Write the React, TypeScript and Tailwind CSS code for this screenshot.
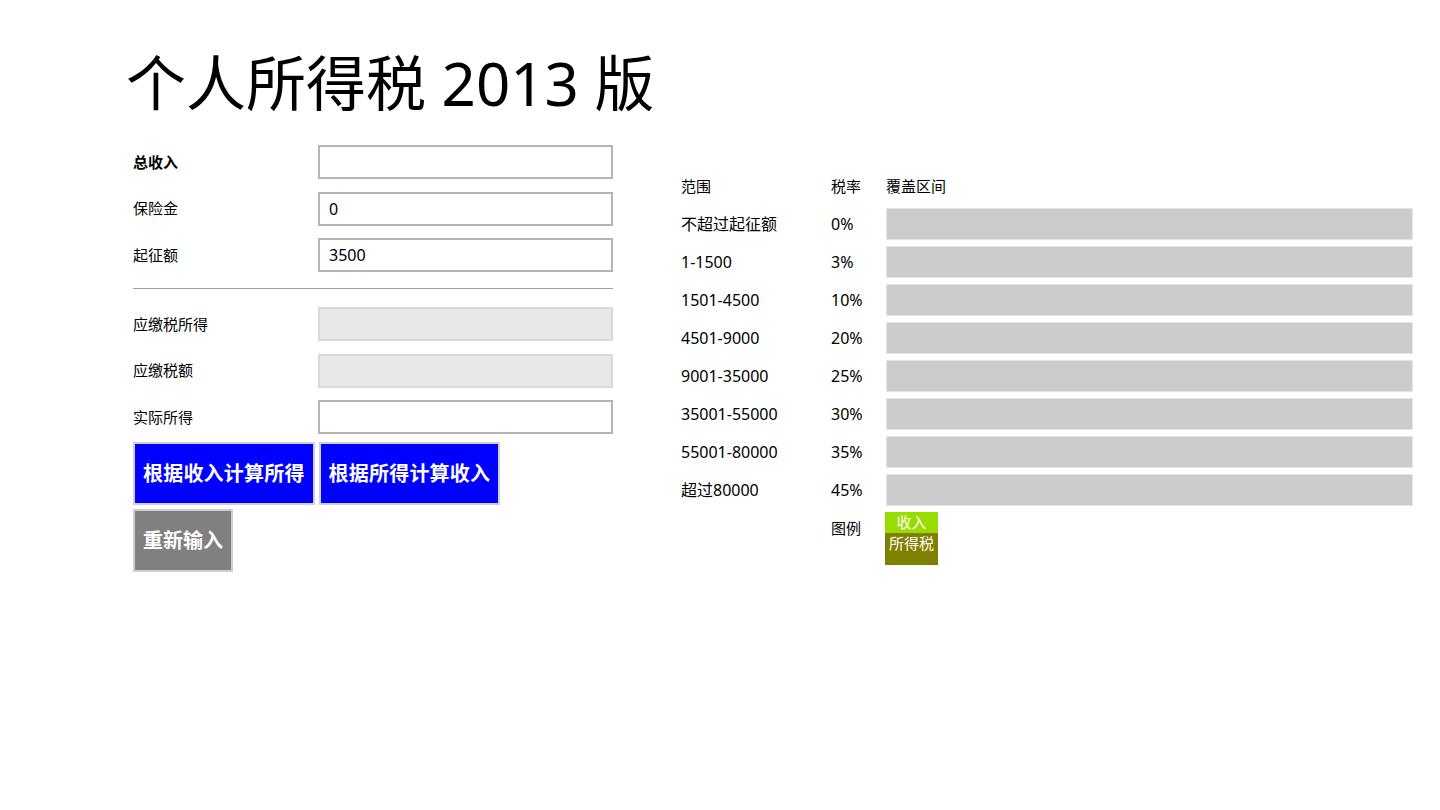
import React from 'react';

const font = { fontFamily: '"Noto Sans", "Noto Sans CJK SC", sans-serif' };

const rows = [
  { range: '不超过起征额', rate: '0%' },
  { range: '1-1500', rate: '3%' },
  { range: '1501-4500', rate: '10%' },
  { range: '4501-9000', rate: '20%' },
  { range: '9001-35000', rate: '25%' },
  { range: '35001-55000', rate: '30%' },
  { range: '55001-80000', rate: '35%' },
  { range: '超过80000', rate: '45%' },
];

function Field({ label, value, bold, disabled }: { label: string; value?: string; bold?: boolean; disabled?: boolean }) {
  return (
    <div className="flex items-center h-[34px]">
      <span className={`w-[185px] text-[15px] text-black ${bold ? 'font-bold' : ''}`}>{label}</span>
      <div
        className={`w-[295px] h-[34px] border-2 flex items-center px-[9px] text-[16px] ${
          disabled ? 'bg-[#e8e8e8] border-[#d9d9d9]' : 'bg-white border-[#b5b5b5]'
        }`}
      >
        {value}
      </div>
    </div>
  );
}

export default function App() {
  return (
    <div className="w-[1440px] h-[810px] bg-white text-black" style={font}>
      <h1 className="pl-[126px] pt-[38px] text-[60px] leading-[90px] font-normal">个人所得税 2013 版</h1>
      <div className="flex mt-[17px] pl-[133px]">
        {/* 左侧表单 */}
        <div className="w-[480px] flex flex-col">
          <div className="flex flex-col gap-[12.5px]">
            <Field label="总收入" bold />
            <Field label="保险金" value="0" />
            <Field label="起征额" value="3500" />
          </div>
          <div className="h-px bg-[#a0a0a0] mt-[16px] mb-[18px]" />
          <div className="flex flex-col gap-[12.5px]">
            <Field label="应缴税所得" disabled />
            <Field label="应缴税额" disabled />
            <Field label="实际所得" />
          </div>
          <div className="flex gap-[4px] mt-[8px]">
            <button className="h-[63px] px-[8px] bg-[#0000ff] border-2 border-[#cfcfcf] text-white text-[20px] font-bold tracking-[0.2px]">根据收入计算所得</button>
            <button className="h-[63px] px-[8px] bg-[#0000ff] border-2 border-[#cfcfcf] text-white text-[20px] font-bold tracking-[0.2px]">根据所得计算收入</button>
          </div>
          <div className="mt-[4px]">
            <button className="h-[63px] px-[8px] bg-[#808080] border-2 border-[#cfcfcf] text-white text-[20px] font-bold">重新输入</button>
          </div>
        </div>

        {/* 右侧税率表 */}
        <div className="ml-[68px] mt-[26px] w-[732px] text-[16px]">
          <div className="flex items-center h-[30px] text-[15px]">
            <span className="w-[150px]">范围</span>
            <span className="w-[55px]">税率</span>
            <span>覆盖区间</span>
          </div>
          <div className="flex flex-col gap-[6px] mt-[7px]">
            {rows.map((r) => (
              <div key={r.range} className="flex items-center h-[32px]">
                <span className="w-[150px]">{r.range}</span>
                <span className="w-[55px]">{r.rate}</span>
                <div className="w-[527px] h-[32px] bg-[#cccccc] border border-[#e4e4e4]" />
              </div>
            ))}
          </div>
          <div className="flex mt-[6px]">
            <span className="w-[150px]" />
            <span className="w-[54px] pt-[5px] text-[15px]">图例</span>
            <div className="w-[53px] flex flex-col text-white text-[15px] leading-[21px] text-center">
              <div className="h-[21px] bg-[#99dd00]">收入</div>
              <div className="h-[32px] bg-[#808000]">所得税</div>
            </div>
          </div>
        </div>
      </div>
    </div>
  );
}
